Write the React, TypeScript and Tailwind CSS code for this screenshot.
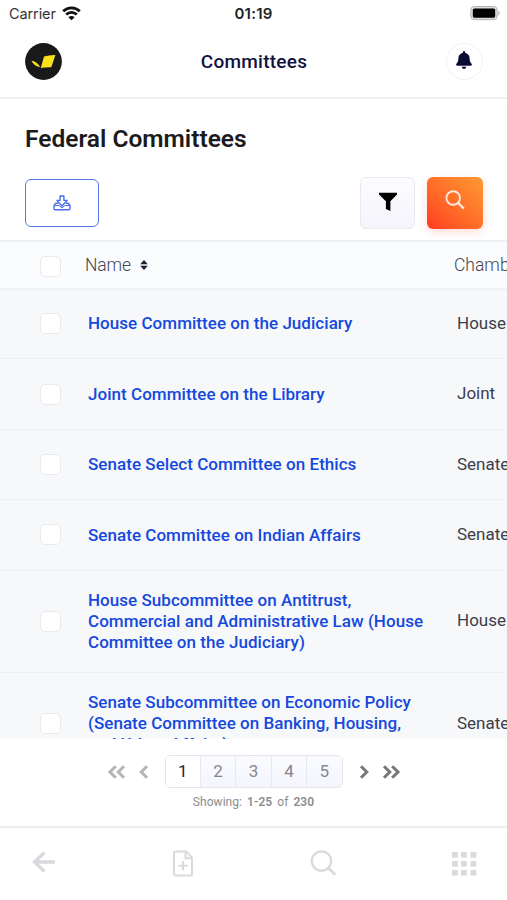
import type { ReactNode } from "react";
import clsx from "clsx";

type Committee = { lines: string[]; chamber: string };

const committees: Committee[] = [
  { lines: ["House Committee on the Judiciary"], chamber: "House" },
  { lines: ["Joint Committee on the Library"], chamber: "Joint" },
  { lines: ["Senate Select Committee on Ethics"], chamber: "Senate" },
  { lines: ["Senate Committee on Indian Affairs"], chamber: "Senate" },
  {
    lines: [
      "House Subcommittee on Antitrust,",
      "Commercial and Administrative Law (House",
      "Committee on the Judiciary)",
    ],
    chamber: "House",
  },
  {
    lines: [
      "Senate Subcommittee on Economic Policy",
      "(Senate Committee on Banking, Housing,",
      "and Urban Affairs)",
    ],
    chamber: "Senate",
  },
];

export default function App() {
  return (
    <div className="flex h-[900px] w-[507px] flex-col overflow-hidden bg-white font-['Roboto',sans-serif] text-[#1d1d1f]">
      <StatusBar />
      <Header />
      <Toolbar />
      <CommitteeTable />
      <Pagination />
      <TabBar />
    </div>
  );
}

function StatusBar() {
  return (
    <div className="grid h-7 shrink-0 grid-cols-3 items-center pl-[9px] pr-[6px] font-['Inter',sans-serif]">
      <div className="flex items-center gap-[6px]">
        <span className="text-[14.5px] tracking-[-0.1px] text-[#333]">Carrier</span>
        <svg className="mb-[2px]" width="19" height="15" viewBox="0 0 19 15" fill="none" stroke="#111" strokeWidth="2.8">
          <path d="M1.2 5.2a11.8 11.8 0 0 1 16.6 0" />
          <path d="M4.2 8.6a7.5 7.5 0 0 1 10.6 0" />
          <path d="M9.5 14.2 6.4 11.2a4.4 4.4 0 0 1 6.2 0z" fill="#111" stroke="none" />
        </svg>
      </div>
      <span className="pr-[3px] text-center text-[15px] font-semibold tracking-[0.2px] text-[#222]">01:19</span>
      <svg className="justify-self-end" width="31" height="16" viewBox="0 0 31 16">
        <rect x="0.8" y="0.5" width="26.4" height="13.2" rx="3.6" fill="#dcdcdc" stroke="#b4b4b4" />
        <rect x="2.8" y="2.5" width="22.4" height="9.2" rx="1.6" fill="#000" />
        <path d="M28.4 4.5q2.6 2.6 0 5.2z" fill="#b4b4b4" />
      </svg>
    </div>
  );
}

function Header() {
  return (
    <header className="flex h-[71px] shrink-0 items-center justify-between border-b-2 border-[#efeff0] pb-[2px] pl-[25px] pr-[24px]">
      <svg width="37" height="37" viewBox="0 0 37 37">
        <circle cx="18.5" cy="18.5" r="18.4" fill="#191919" />
        <path d="M6.4 17.7C9.8 18 13.400 20.300 15.300 24.300 11.400 23.800 8.300 21.300 6.400 17.700z" fill="#f9e21b" />
        <path d="M19 13.600Q24.500 11.800 30.400 12L26.300 24.200Q20.700 24 15.800 24.900z" fill="#f9e21b" />
      </svg>
      <h1 className="pt-[1px] text-[19px] font-medium tracking-[0.25px] text-[#12123f]">Committees</h1>
      <button className="flex size-[37px] items-center justify-center rounded-full border border-[#f2f2f4]">
        <svg className="mb-[3px]" width="16" height="18" viewBox="0 0 448 512" fill="#090b35">
          <path d="M224 512c35.320 0 63.970-28.650 63.970-64H160.030c0 35.350 28.650 64 63.970 64zm215.390-149.710c-19.320-20.760-55.470-51.990-55.470-154.290 0-77.700-54.480-139.900-127.940-155.160V32c0-17.670-14.320-32-31.980-32s-31.980 14.330-31.980 32v20.840C118.560 68.100 64.080 130.300 64.080 208c0 102.300-36.150 133.530-55.470 154.290-6 6.450-8.660 14.160-8.610 21.710.11 16.400 12.980 32 32.100 32h383.800c19.120 0 32-15.600 32.100-32 .05-7.550-2.610-15.270-8.610-21.710z" />
        </svg>
      </button>
    </header>
  );
}

function Toolbar() {
  return (
    <section className="flex h-[141px] shrink-0 flex-col px-[25px] pt-[24px]">
      <h2 className="text-[24.5px] font-semibold leading-8 text-[#1b1b1d]">Federal Committees</h2>
      <div className="mt-[22px] flex items-center">
        <button className="mb-px flex h-[48px] w-[74px] items-center justify-center rounded-[6px] border-[1.5px] border-[#5878ea]">
          <svg width="18" height="16" viewBox="0 0 18 16" fill="none" stroke="#4a6df0" strokeWidth="1.4" strokeLinejoin="round">
            <path d="M7.100 1h3.800v4.400h3.200L9 11 3.900 5.400h3.200z" />
            <path d="M5.200 8.300H2.600L1 10.500v3.300q0 1 1 1h14q1 0 1-1v-3.300l-1.600-2.200h-2.600" />
            <path d="M1.200 10.500h4.600L9 12.800l3.200-2.300h4.600" strokeWidth="1" />
          </svg>
        </button>
        <button className="ml-auto flex h-[52px] w-[55px] items-center justify-center rounded-[6px] border border-[#e9eaf1] bg-gradient-to-b from-[#fcfcfe] to-[#f5f6fc]">
          <svg className="mb-[3px]" width="20" height="20" viewBox="0 0 20 20" fill="#000">
            <path d="M1 0.8h18v1.6L12.400 9.200V19L7.900 17V9.200L1 2.400z" />
          </svg>
        </button>
        <button className="ml-[12px] mr-[-1px] flex h-[52px] w-[56px] items-center justify-center rounded-[6px] bg-gradient-to-tr from-[#ff3a20] to-[#ff9832] shadow-[0_3px_8px_rgba(255,80,60,0.2)]">
          <svg className="mb-[6px]" width="20" height="20" viewBox="0 0 20 20" fill="none" stroke="#ffe9e0" strokeWidth="1.9">
            <circle cx="8.2" cy="8" r="6.8" />
            <path d="m13 12.800 5.800 5.800" strokeWidth="2.300" />
          </svg>
        </button>
      </div>
    </section>
  );
}

function Checkbox() {
  return <span className="size-[21px] shrink-0 rounded-[5px] border border-[#e9eaed] bg-white" />;
}

function CommitteeTable() {
  return (
    <section className="flex h-[499px] shrink-0 flex-col overflow-hidden border-t-2 border-[#eeeff1] bg-[#f7f8fa]">
      <div className="flex h-[48px] shrink-0 items-center border-b-2 border-[#f1f2f4] bg-[#fbfcfe] pl-[40px] pt-[2px] text-[17.5px] font-light text-[#45464f]">
        <Checkbox />
        <span className="mb-[2px] ml-[24px] w-[45px] tracking-[-0.1px]">Name</span>
        <svg className="mb-[2px] ml-[10px] shrink-0" width="8" height="10" viewBox="0 0 8 10" fill="#1d1e33">
          <path d="M4 0l3.800 4.200H0.200zM4 10 0.200 5.800h7.600z" />
        </svg>
        <span className="mb-[2px] ml-[306px] whitespace-nowrap">Chamber</span>
      </div>
      <div className="-mt-px flex flex-col">
        {committees.map((c) => (
          <div
            key={c.lines[0]}
            className={clsx(
              "flex shrink-0 items-center border-b border-[#eff0f3] pl-[40px]",
              c.lines.length > 1 ? "h-[102.2px]" : "h-[70.4px]",
            )}
          >
            <Checkbox />
            <div className="ml-[27px] w-[369px] shrink-0 text-[17px] font-medium leading-[20.7px] tracking-[0.04px] text-[#1549dd]">
              {c.lines.map((line) => (
                <div key={line} className="whitespace-nowrap">
                  {line}
                </div>
              ))}
            </div>
            <span className="whitespace-nowrap text-[17px] text-[#3c3d4b]">{c.chamber}</span>
          </div>
        ))}
      </div>
    </section>
  );
}

function Chevrons({ left, double, color }: { left?: boolean; double?: boolean; color: string }) {
  return (
    <svg
      className={clsx("shrink-0", left && "-scale-x-100")}
      width={double ? 19 : 11}
      height="14"
      viewBox={double ? "0 0 19 14" : "0 0 11 14"}
      fill="none"
      stroke={color}
      strokeWidth="3"
    >
      <path d="m2 1.200 5.800 5.800L2 12.800" />
      {double && <path d="m10.200 1.200 5.800 5.800-5.800 5.800" />}
    </svg>
  );
}

function Pagination() {
  return (
    <section className="flex h-[87px] shrink-0 flex-col items-center bg-white pt-[16px]">
      <div className="flex items-center">
        <Chevrons left double color="#b5b5b7" />
        <span className="w-[12px]" />
        <Chevrons left color="#b5b5b7" />
        <div className="mx-[16px] flex h-[33px] w-[178px] overflow-hidden rounded-[5px] border border-[#e5e6f0] text-[17px] text-[#85868e]">
          {[1, 2, 3, 4, 5].map((page) => (
            <button
              key={page}
              className={clsx(
                "flex-1",
                page === 1 ? "bg-white text-[#25263f]" : "border-l border-[#e7e8f2] bg-gradient-to-b from-[#fafbfe] to-[#f5f6fd]",
              )}
            >
              {page}
            </button>
          ))}
        </div>
        <Chevrons color="#77777a" />
        <span className="w-[12px]" />
        <Chevrons double color="#77777a" />
      </div>
      <p className="mt-[6px] text-[12px] leading-4 tracking-[0.05px] text-[#8b8b8e] [word-spacing:2px]">
        Showing: <b className="font-semibold">1-25</b> of <b className="font-semibold">230</b>
      </p>
    </section>
  );
}

function TabIcon({ size, children }: { size: number; children: ReactNode }) {
  return (
    <button>
      <svg width={size} height="28" viewBox={`0 0 ${size} 28`} fill="none" stroke="#d9dadd">
        {children}
      </svg>
    </button>
  );
}

function TabBar() {
  return (
    <nav className="flex h-[74px] shrink-0 items-start justify-between border-t-2 border-[#ededee] bg-white pl-[32px] pr-[30px] pt-[21px]">
      <TabIcon size={24}>
        <path d="M12.500 3.500 2.500 13l10 9.500M2.500 13H23" strokeWidth="3.300" />
      </TabIcon>
      <TabIcon size={22}>
        <path d="M4.500 2.500h10.800L21 8.600V25q0 1.500-1.500 1.500h-15Q3 26.500 3 25V4q0-1.500 1.500-1.500z" strokeWidth="2" />
        <path d="M14.500 2.500v6.800H21" strokeWidth="2" />
        <path d="M12 12v9.500M7.300 16.800h9.400" strokeWidth="1.900" />
      </TabIcon>
      <TabIcon size={27}>
        <circle cx="12.500" cy="12" r="9.700" strokeWidth="2.200" />
        <path d="m19.300 18.800 6.900 7" strokeWidth="2.700" />
      </TabIcon>
      <TabIcon size={26}>
        {[3, 12, 21].map((y) =>
          [1, 10, 19.5].map((x) => (
            <rect key={`${x}-${y}`} x={x} y={y} width="5.8" height="5.6" fill="#d9dadd" stroke="none" />
          )),
        )}
      </TabIcon>
    </nav>
  );
}
